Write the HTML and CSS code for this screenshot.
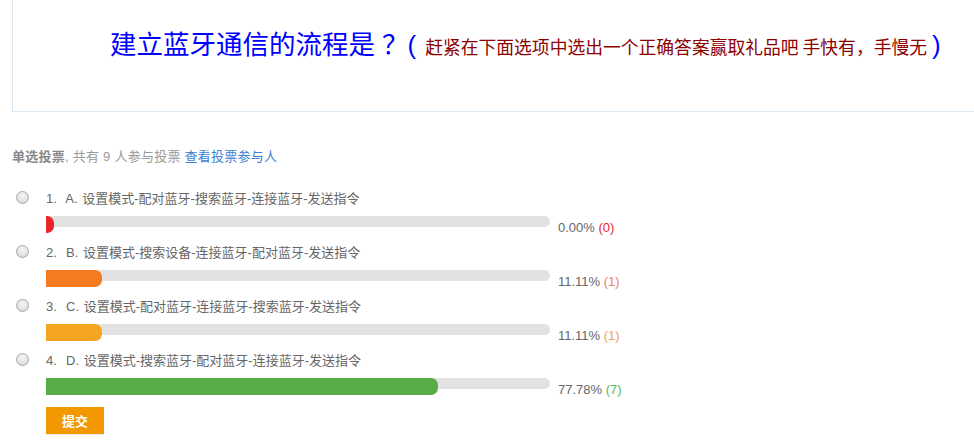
FILE: index.html
```html
<!DOCTYPE html>
<html lang="zh-CN">
<head>
<meta charset="utf-8">
<title>投票</title>
<link rel="stylesheet" href="styles.css">
</head>
<body>
<div class="page">
  <div class="topic">
    <h1 class="title">建立蓝牙通信的流程是<span class="qmark">？</span><span class="paren open">(</span><span class="hint">赶紧在下面选项中选出一个正确答案赢取礼品吧 手快有，手慢无</span><span class="paren close">)</span></h1>
  </div>
  <p class="meta"><b>单选投票</b>, 共有 9 人参与投票 <a href="#" class="link">查看投票参与人</a></p>
  <form class="poll">
    <div class="opt">
      <label class="opt-label"><input type="radio" name="v" class="radio"><span class="opt-text">1.&nbsp; A. 设置模式-配对蓝牙-搜索蓝牙-连接蓝牙-发送指令</span></label>
      <div class="result">
        <div class="track"><div class="fill red" style="width:0%"></div></div>
        <span class="pct">0.00% <span class="cnt c-red">(0)</span></span>
      </div>
    </div>
    <div class="opt">
      <label class="opt-label"><input type="radio" name="v" class="radio"><span class="opt-text">2.&nbsp; B. 设置模式-搜索设备-连接蓝牙-配对蓝牙-发送指令</span></label>
      <div class="result">
        <div class="track"><div class="fill orange" style="width:11.11%"></div></div>
        <span class="pct">11.11% <span class="cnt c-salmon">(1)</span></span>
      </div>
    </div>
    <div class="opt">
      <label class="opt-label"><input type="radio" name="v" class="radio"><span class="opt-text">3.&nbsp; C. 设置模式-配对蓝牙-连接蓝牙-搜索蓝牙-发送指令</span></label>
      <div class="result">
        <div class="track"><div class="fill amber" style="width:11.11%"></div></div>
        <span class="pct">11.11% <span class="cnt c-amber">(1)</span></span>
      </div>
    </div>
    <div class="opt">
      <label class="opt-label"><input type="radio" name="v" class="radio"><span class="opt-text">4.&nbsp; D. 设置模式-搜索蓝牙-配对蓝牙-连接蓝牙-发送指令</span></label>
      <div class="result">
        <div class="track"><div class="fill green" style="width:77.78%"></div></div>
        <span class="pct">77.78% <span class="cnt c-green">(7)</span></span>
      </div>
    </div>
    <button type="button" class="submit">提交</button>
  </form>
</div>
</body>
</html>
```
FILE: styles.css
```css
html, body {
  margin: 0;
  padding: 0;
  background: #fff;
  overflow: hidden;
}
body {
  font-family: "Liberation Sans", "Noto Sans CJK SC", sans-serif;
  color: #666;
}
.page {
  padding-left: 12px;
}
.topic {
  height: 111px;
  border-left: 1px solid #dde9f3;
  border-bottom: 1px solid #dde9f3;
}
.title {
  margin: 0;
  padding: 25px 0 0 97px;
  font-size: 26.5px;
  font-weight: normal;
  line-height: 36px;
  color: #0000ff;
  white-space: nowrap;
  font-family: "Noto Sans CJK SC", sans-serif;
}
.qmark {
  margin-left: 7px;
  margin-right: -1px;
}
.paren {
  font-family: "Liberation Sans", sans-serif;
  font-size: 26px;
  color: #0000ff;
}
.paren.open {
  margin-right: 9px;
}
.paren.close {
  margin-left: 5px;
}
.hint {
  font-size: 17.8px;
  color: #8b0000;
}
.meta {
  margin: 36px 0 0 0;
  font-size: 13px;
  line-height: 18px;
  color: #999;
  letter-spacing: 0.25px;
}
.meta b {
  color: #888;
  font-weight: bold;
}
.link {
  color: #3a7fd5;
  text-decoration: none;
}
.poll {
  margin-top: 21px;
}
.opt {
  height: 54px;
}
.opt-label {
  display: flex;
  align-items: center;
  height: 20px;
}
.radio {
  appearance: none;
  -webkit-appearance: none;
  width: 13px;
  height: 13px;
  margin: 0 17px 0 4px;
  border-radius: 50%;
  border: 1px solid #a9a9a9;
  background: radial-gradient(circle at 50% 35%, #f6f6f6 0%, #e2e2e2 60%, #cfcfcf 100%);
  box-sizing: border-box;
}
.opt-text {
  font-size: 13px;
  color: #666;
  word-spacing: 1px;
}
.result {
  display: flex;
  align-items: flex-start;
  margin-left: 34px;
  margin-top: 9px;
}
.track {
  width: 504px;
  height: 11px;
  background: #e2e2e2;
  border-radius: 0 6px 6px 0;
}
.fill {
  height: 17px;
  min-width: 8px;
  border-radius: 0 7px 7px 0;
}
.red { background: #e8262a; }
.orange { background: #f47b20; }
.amber { background: #f4a622; }
.green { background: #57ac48; }
.pct {
  margin-left: 8px;
  margin-top: 5px;
  font-size: 13px;
  line-height: 14px;
  color: #666;
}
.c-red { color: #e8262a; }
.c-salmon { color: #f07e6e; }
.c-amber { color: #f5a05a; }
.c-green { color: #5cb85c; }
.submit {
  display: block;
  margin: 4px 0 0 34px;
  width: 58px;
  height: 28px;
  border: 0;
  border-bottom: 1px solid #e6e6e6;
  background: #f39800;
  color: #fff;
  font-family: "Noto Sans CJK SC", sans-serif;
  font-size: 13px;
  font-weight: bold;
  padding: 0;
}
```
